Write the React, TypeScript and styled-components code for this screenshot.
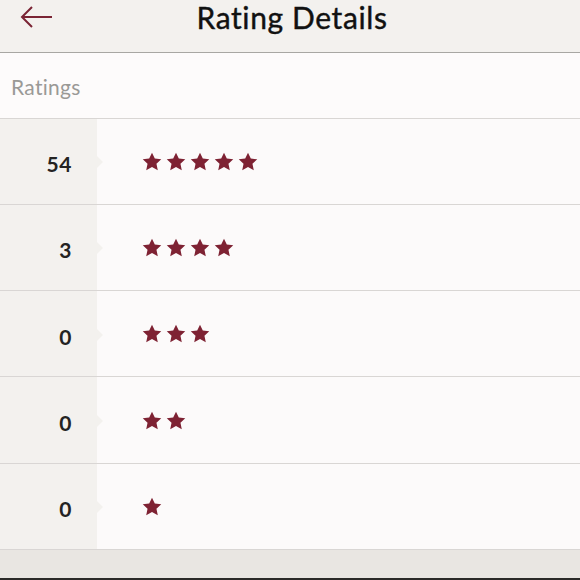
import React from "react";
import styled, { createGlobalStyle } from "styled-components";

const GlobalStyle = createGlobalStyle`
  html, body {
    margin: 0;
    padding: 0;
    background: #e9e6e2;
  }
  body {
    font-family: Lato, "Open Sans", sans-serif;
  }
`;

const Page = styled.div`
  width: 580px;
  height: 580px;
  display: flex;
  flex-direction: column;
  overflow: hidden;
  background: #e9e6e2;
  border-bottom: 2px solid #2b2a28;
  box-sizing: border-box;
`;

const Header = styled.div`
  height: 53px;
  flex-shrink: 0;
  position: relative;
  display: flex;
  align-items: center;
  justify-content: center;
  background: #f3f1ee;
  border-bottom: 1.5px solid #a8a7a3;
  box-sizing: border-box;
`;

const BackButton = styled.button`
  position: absolute;
  left: 18px;
  top: 3px;
  border: 0;
  padding: 0;
  background: none;
  width: 36px;
  height: 28px;
  display: flex;
  align-items: center;
  justify-content: center;
`;

const Title = styled.h1`
  margin: -19px 0 0 4px;
  font-size: 30px;
  font-weight: 400;
  color: #111;
  letter-spacing: 0.6px;
  -webkit-text-stroke: 0.4px #111;
`;

const SectionLabel = styled.div`
  height: 65.5px;
  flex-shrink: 0;
  display: flex;
  align-items: center;
  padding-left: 11px;
  padding-top: 2px;
  background: #fdfbfb;
  border-bottom: 1.5px solid #d9d6d4;
  box-sizing: border-box;
  font-size: 21px;
  letter-spacing: 0.3px;
  color: #9a9996;
`;

const Row = styled.div`
  height: 86.3px;
  flex-shrink: 0;
  display: flex;
  background: #fcfafa;
  border-bottom: 1.5px solid #d9d6d4;
  box-sizing: border-box;
`;

const Count = styled.div`
  width: 97px;
  flex-shrink: 0;
  position: relative;
  display: flex;
  align-items: center;
  justify-content: flex-end;
  padding-right: 25px;
  padding-top: 5px;
  box-sizing: border-box;
  background: #f3f1ee;
  font-size: 21px;
  font-weight: 700;
  letter-spacing: 0.6px;
  color: #242322;

  &::after {
    content: "";
    position: absolute;
    right: -6px;
    top: 50%;
    margin-top: -5px;
    border-left: 6px solid #f3f1ee;
    border-top: 6px solid transparent;
    border-bottom: 6px solid transparent;
  }
`;

const Stars = styled.div`
  display: flex;
  align-items: center;
  gap: 4px;
  padding-left: 45px;
`;

const Star = () => (
  <svg width="20" height="19" viewBox="0 0 24 23">
    <path
      d="M12 0.8l3.4 7.1 7.8 0.9-5.8 5.4 1.6 7.8L12 18.2l-7 3.8 1.6-7.8L0.8 8.8l7.8-0.9z"
      fill="#7e2233"
    />
  </svg>
);

const rows = [
  { count: 54, stars: 5 },
  { count: 3, stars: 4 },
  { count: 0, stars: 3 },
  { count: 0, stars: 2 },
  { count: 0, stars: 1 },
];

const App = () => {
  return (
    <Page>
      <GlobalStyle />
      <Header>
        <BackButton aria-label="Back">
          <svg width="34" height="24" viewBox="0 0 34 24">
            <path
              d="M33 12H3M13 2L3 12l10 10"
              fill="none"
              stroke="#7a2434"
              strokeWidth="2"
            />
          </svg>
        </BackButton>
        <Title>Rating Details</Title>
      </Header>
      <SectionLabel>Ratings</SectionLabel>
      {rows.map((r, i) => (
        <Row key={i}>
          <Count>{r.count}</Count>
          <Stars>
            {Array.from({ length: r.stars }).map((_, j) => (
              <Star key={j} />
            ))}
          </Stars>
        </Row>
      ))}
    </Page>
  );
};

export default App;
